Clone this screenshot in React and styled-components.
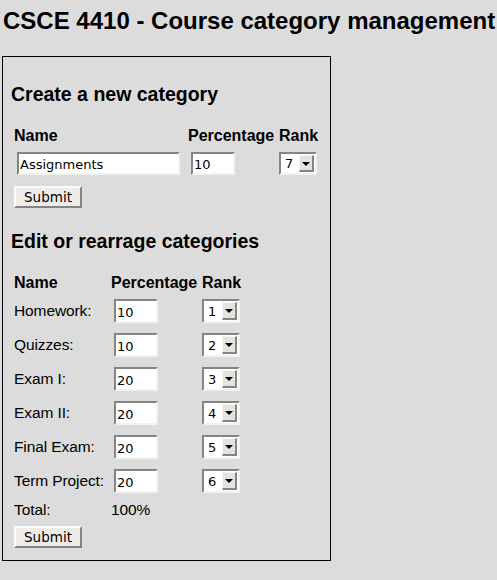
import React from "react";
import styled, { createGlobalStyle } from "styled-components";

const GlobalStyle = createGlobalStyle`
  html, body {
    margin: 0;
    background: #dcdcdc;
  }
  body {
    padding: 0 2px;
    font-family: "Liberation Sans", Arial, sans-serif;
    font-size: 16px;
    color: #000;
  }
`;

const Title = styled.h1`
  margin: 0;
  padding: 7px 0 0 1px;
  font-size: 24px;
  font-weight: bold;
  line-height: 28px;
  white-space: nowrap;
`;

const Panel = styled.div`
  width: 329px;
  height: 505px;
  margin-top: 21px;
  padding: 26px 0 0 8px;
  box-sizing: border-box;
  border: 1px solid #000;
`;

const Heading = styled.h2`
  margin: ${(p) => p.$top}px 0 0 0;
  font-size: 19.5px;
  font-weight: bold;
  line-height: 22px;
`;

const Grid = styled.div`
  display: grid;
  grid-template-columns: ${(p) => p.$cols};
  grid-auto-rows: ${(p) => p.$row};
  align-items: center;
  margin-top: ${(p) => p.$top}px;
  padding-left: 3px;
`;

const HeadCell = styled.div`
  font-size: 16px;
  font-weight: bold;
  line-height: 18px;
  white-space: nowrap;
`;

const Label = styled.div`
  font-size: 15.5px;
  line-height: 18px;
  white-space: nowrap;
  letter-spacing: -0.1px;
`;

const TextField = styled.input`
  box-sizing: border-box;
  width: ${(p) => p.$w}px;
  height: ${(p) => p.$h}px;
  margin-left: 3px;
  padding: 2px 1px 0;
  border-style: solid;
  border-width: 2px;
  border-color: #848484 #f2f2f2 #f2f2f2 #848484;
  background: #fff;
  font-family: "DejaVu Sans", sans-serif;
  font-size: 13px;
  color: #000;
  outline: none;
`;

const SelectBox = styled.div`
  position: relative;
  box-sizing: border-box;
  width: 38px;
  height: ${(p) => p.$h}px;
  border-style: solid;
  border-width: 2px;
  border-color: #848484 #f2f2f2 #f2f2f2 #848484;
  background: #fff;
  justify-self: start;
`;

const NativeSelect = styled.select`
  appearance: none;
  width: 100%;
  height: 100%;
  border: 0;
  padding: 0 0 0 4px;
  margin: 0;
  background: transparent;
  font-family: "DejaVu Sans", sans-serif;
  font-size: 13px;
  color: #000;
  outline: none;
`;

const ArrowButton = styled.span`
  position: absolute;
  top: 1px;
  right: 1px;
  bottom: 1px;
  width: 15px;
  box-sizing: border-box;
  background: #e6e3df;
  border-style: solid;
  border-width: 1px 2px 2px 1px;
  border-color: #f6f6f6 #848484 #848484 #f6f6f6;
  display: flex;
  align-items: center;
  justify-content: center;
  pointer-events: none;
`;

const Triangle = styled.span`
  width: 0;
  height: 0;
  border-left: 4px solid transparent;
  border-right: 4px solid transparent;
  border-top: 4px solid #000;
  margin-top: 1px;
`;

const Button = styled.button`
  box-sizing: border-box;
  width: 68px;
  height: 22px;
  margin: ${(p) => p.$top}px 0 0 3px;
  padding: 0;
  background: #efece8;
  border-style: solid;
  border-width: 2px;
  border-color: #fbfbfb #848484 #848484 #fbfbfb;
  font-family: "DejaVu Sans", sans-serif;
  font-size: 13.5px;
  color: #000;
  display: block;
`;

const Rank = ({ value, h }) => (
  <SelectBox $h={h}>
    <NativeSelect defaultValue={value}>
      {[1, 2, 3, 4, 5, 6, 7].map((n) => (
        <option key={n} value={n}>
          {n}
        </option>
      ))}
    </NativeSelect>
    <ArrowButton>
      <Triangle />
    </ArrowButton>
  </SelectBox>
);

const categories = [
  { name: "Homework:", pct: 10, rank: 1 },
  { name: "Quizzes:", pct: 10, rank: 2 },
  { name: "Exam I:", pct: 20, rank: 3 },
  { name: "Exam II:", pct: 20, rank: 4 },
  { name: "Final Exam:", pct: 20, rank: 5 },
  { name: "Term Project:", pct: 20, rank: 6 },
];

export default function App() {
  return (
    <>
      <GlobalStyle />
      <Title>CSCE 4410 - Course category management</Title>
      <Panel>
        <Heading $top={0}>Create a new category</Heading>
        <Grid $cols="174px 91px 40px" $row="18px" $top={22}>
          <HeadCell>Name</HeadCell>
          <HeadCell>Percentage</HeadCell>
          <HeadCell>Rank</HeadCell>
        </Grid>
        <Grid $cols="174px 91px 40px" $row="23px" $top={7}>
          <TextField $w={163} $h={23} defaultValue="Assignments" />
          <TextField $w={44} $h={23} defaultValue="10" />
          <Rank value={7} h={23} />
        </Grid>
        <Button $top={11}>Submit</Button>
        <Heading $top={22}>Edit or rearrage categories</Heading>
        <Grid $cols="97px 91px 40px" $row="18px" $top={22}>
          <HeadCell>Name</HeadCell>
          <HeadCell>Percentage</HeadCell>
          <HeadCell>Rank</HeadCell>
        </Grid>
        <Grid $cols="97px 91px 40px" $row="34px" $top={2}>
          {categories.map((c) => (
            <React.Fragment key={c.name}>
              <Label>{c.name}</Label>
              <TextField $w={44} $h={24} defaultValue={c.pct} />
              <Rank value={c.rank} h={24} />
            </React.Fragment>
          ))}
        </Grid>
        <Grid $cols="97px 91px 40px" $row="18px" $top={3}>
          <Label>Total:</Label>
          <Label>100%</Label>
        </Grid>
        <Button $top={7}>Submit</Button>
      </Panel>
    </>
  );
}
